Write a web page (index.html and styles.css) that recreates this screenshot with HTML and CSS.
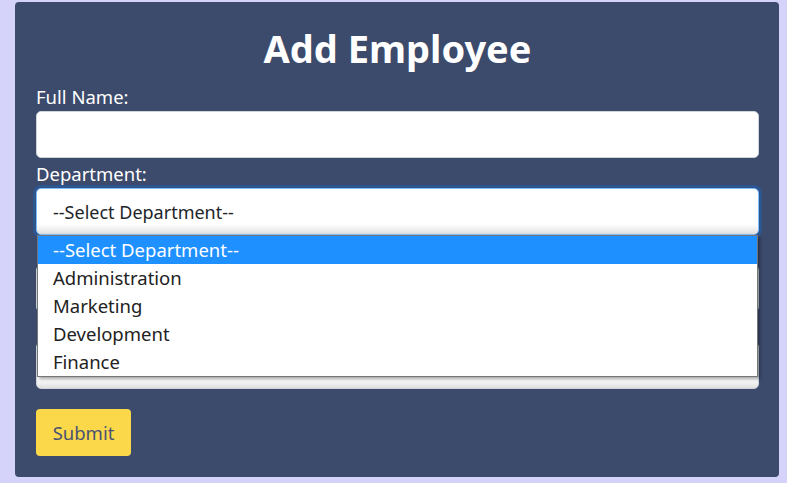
FILE: index.html
```html
<!DOCTYPE html>
<html lang="en">
<head>
<meta charset="utf-8">
<title>Add Employee</title>
<link rel="stylesheet" href="styles.css">
</head>
<body>
<div class="page">
  <form class="card">
    <h1 class="title">Add Employee</h1>
    <div class="group">
      <label class="label" for="name">Full Name:</label>
      <input class="field" id="name" type="text">
    </div>
    <div class="group dept">
      <label class="label" for="dept">Department:</label>
      <div class="select-wrap">
        <select class="field select focused" id="dept">
          <option>--Select Department--</option>
          <option>Administration</option>
          <option>Marketing</option>
          <option>Development</option>
          <option>Finance</option>
        </select>
        <ul class="dropdown">
          <li class="opt active">--Select Department--</li>
          <li class="opt">Administration</li>
          <li class="opt">Marketing</li>
          <li class="opt">Development</li>
          <li class="opt">Finance</li>
        </ul>
      </div>
    </div>
    <div class="group covered">
      <label class="label" for="pos" aria-label="Position"></label>
      <select class="field select" id="pos" aria-label="Position">
        <option value=""></option>
      </select>
    </div>
    <div class="group covered">
      <label class="label" for="sal" aria-label="Salary"></label>
      <select class="field select" id="sal" aria-label="Salary">
        <option value=""></option>
      </select>
    </div>
    <button class="submit" type="button">Submit</button>
  </form>
</div>
</body>
</html>
```

FILE: styles.css
```css
* { box-sizing: border-box; }

html, body {
  margin: 0;
  padding: 0;
  background: #d6d3fa;
  font-family: "Noto Sans", "Open Sans", sans-serif;
}

.page {
  padding: 2px 8px 6px 15px;
}

.card {
  display: flex;
  flex-direction: column;
  background: #3c4a6b;
  border-radius: 4px;
  padding: 0 20px 21px 21px;
  height: 475px;
}

.title {
  margin: 0;
  height: 83px;
  padding-top: 22px;
  font-size: 38px;
  line-height: 48px;
  font-weight: 700;
  color: #ffffff;
  text-align: center;
}

.group {
  display: flex;
  flex-direction: column;
}

.label {
  display: block;
  height: 24px;
  margin: 4px 0 2px;
  font-size: 18.5px;
  line-height: 24px;
  color: #ffffff;
}

.group:first-of-type .label {
  margin-top: 0;
}

.field {
  display: block;
  width: 100%;
  height: 47px;
  margin: 0;
  padding: 0 16px;
  border: 1px solid #ced4da;
  border-radius: 5px;
  background: #ffffff;
  font-family: inherit;
  font-size: 18px;
  color: #212529;
  outline: none;
}

.select {
  appearance: none;
  -webkit-appearance: none;
  background: linear-gradient(to bottom, #ffffff 0%, #ffffff 78%, #ececec 92%, #dedede 100%);
}

.focused {
  border-color: #80bdff;
  box-shadow: 0 0 0 3px rgba(0, 123, 255, 0.25);
}

.select-wrap {
  position: relative;
}

.dropdown {
  position: absolute;
  left: 1px;
  right: 1px;
  top: 47px;
  z-index: 5;
  margin: 0;
  padding: 0;
  list-style: none;
  background: #ffffff;
  border: 1px solid #767676;
  box-shadow: 2px 2px 3px rgba(0, 0, 0, 0.35);
}

.opt {
  height: 28px;
  line-height: 28px;
  padding-left: 15px;
  font-size: 18.5px;
  color: #222222;
  white-space: nowrap;
}

.opt.active {
  background: #1e90ff;
  color: #ffffff;
}

.submit {
  align-self: flex-start;
  margin-top: 20px;
  width: 95px;
  height: 47px;
  padding: 0;
  border: none;
  border-radius: 4px;
  background: #fbd84a;
  color: #4a5274;
  font-family: inherit;
  font-size: 18.5px;
}
```
